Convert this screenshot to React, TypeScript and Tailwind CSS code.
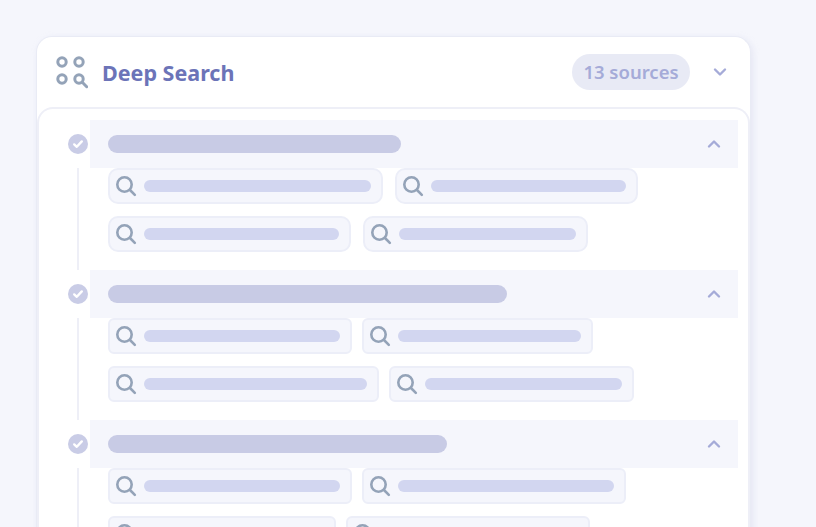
import React from 'react';

const font = { fontFamily: '"Noto Sans", sans-serif' };

const SearchGlyph = () => (
    <svg width="22" height="22" viewBox="0 0 22 22" fill="none" stroke="#94a3b8" strokeWidth="2.6" strokeLinecap="round" className="shrink-0">
        <circle cx="9.5" cy="9.5" r="7.2" />
        <path d="M15 15l4.8 4.8" />
    </svg>
);

const DeepSearchIcon = () => (
    <svg width="34" height="34" viewBox="0 0 34 34" fill="none" stroke="#94a3b8" strokeWidth="3" strokeLinecap="round">
        <circle cx="8" cy="7" r="4.2" />
        <circle cx="25" cy="7" r="4.2" />
        <circle cx="8" cy="24" r="4.2" />
        <circle cx="25" cy="24" r="4.2" />
        <path d="M28.5 27.5l4.2 4.2" />
    </svg>
);

const Chevron = ({ up }: { up?: boolean }) => (
    <svg width="14" height="10" viewBox="0 0 14 10" fill="none" stroke="#a5abd8" strokeWidth="2.4" strokeLinecap="round" strokeLinejoin="round">
        <path d={up ? 'M2 7.5L7 2.5l5 5' : 'M2 2.5l5 5 5-5'} />
    </svg>
);

const CheckDot = () => (
    <div className="w-5 h-5 rounded-full bg-[#c9cce6] flex items-center justify-center">
        <svg width="12" height="12" viewBox="0 0 12 12" fill="none" stroke="#ffffff" strokeWidth="2.4" strokeLinecap="round" strokeLinejoin="round">
            <path d="M2.2 6.4l2.6 2.4 5-5.4" />
        </svg>
    </div>
);

const Chip = ({ width, radius }: { width: number; radius: string }) => (
    <div className={`h-9 bg-[#f5f6fc] border-2 border-[#eceef8] flex items-center pl-[5px] pr-[10px] gap-[7px] ${radius}`} style={{ width }}>
        <SearchGlyph />
        <div className="flex-1 h-3 rounded-full bg-[#d2d6f0]" />
    </div>
);

const Section = ({ titleWidth, rows, radius, gap }: { titleWidth: number; rows: number[][]; radius: string; gap: string }) => (
    <div className="h-[150px]">
        <div className="flex items-center h-12">
            <div className="w-[51px] pl-[29px] shrink-0">
                <CheckDot />
            </div>
            <div className="flex-1 h-12 bg-[#f5f6fc] flex items-center justify-between pl-[18px] pr-[17px]">
                <div className="h-[18px] rounded-full bg-[#c8cbe5]" style={{ width: titleWidth }} />
                <Chevron up />
            </div>
        </div>
        <div className="flex h-[102px]">
            <div className="w-[69px] pl-[38px] shrink-0">
                <div className="w-0.5 h-full bg-[#eeeff7]" />
            </div>
            <div className="flex flex-col gap-3">
                {rows.map((row, i) => (
                    <div key={i} className={`flex ${gap}`}>
                        {row.map((w, j) => (
                            <Chip key={j} width={w} radius={radius} />
                        ))}
                    </div>
                ))}
            </div>
        </div>
    </div>
);

export default function App() {
    return (
        <div className="h-[527px] overflow-hidden bg-[#f5f6fc] pt-9 pl-9 pr-[65px]" style={font}>
            <div className="h-[560px] bg-white rounded-t-2xl border border-[#e9ebf5] border-b-0 shadow-[2px_2px_6px_rgba(200,204,230,0.35)]">
                {/* Header */}
                <div className="h-[70px] flex items-center pl-[17px] pr-[23px]">
                    <DeepSearchIcon />
                    <span className="ml-[14px] pt-0.5 text-[21.5px] font-bold text-[#6c74b8]">Deep Search</span>
                    <span className="ml-auto h-9 w-[118px] rounded-full bg-[#e8eaf5] flex items-center justify-center text-[18.5px] font-semibold text-[#a5abd8]">13 sources</span>
                    <div className="ml-[23px]">
                        <Chevron />
                    </div>
                </div>
                {/* Steps */}
                <div className="rounded-t-2xl border-2 border-b-0 border-[#eeeff7] pt-[11px] pr-2.5">
                    <Section titleWidth={293} radius="rounded-[10px]" gap="gap-3" rows={[[275, 243], [243, 225]]} />
                    <Section titleWidth={399} radius="rounded-[6px]" gap="gap-2.5" rows={[[244, 231], [271, 245]]} />
                    <Section titleWidth={339} radius="rounded-[6px]" gap="gap-2.5" rows={[[244, 264], [228, 244]]} />
                </div>
            </div>
        </div>
    );
}
